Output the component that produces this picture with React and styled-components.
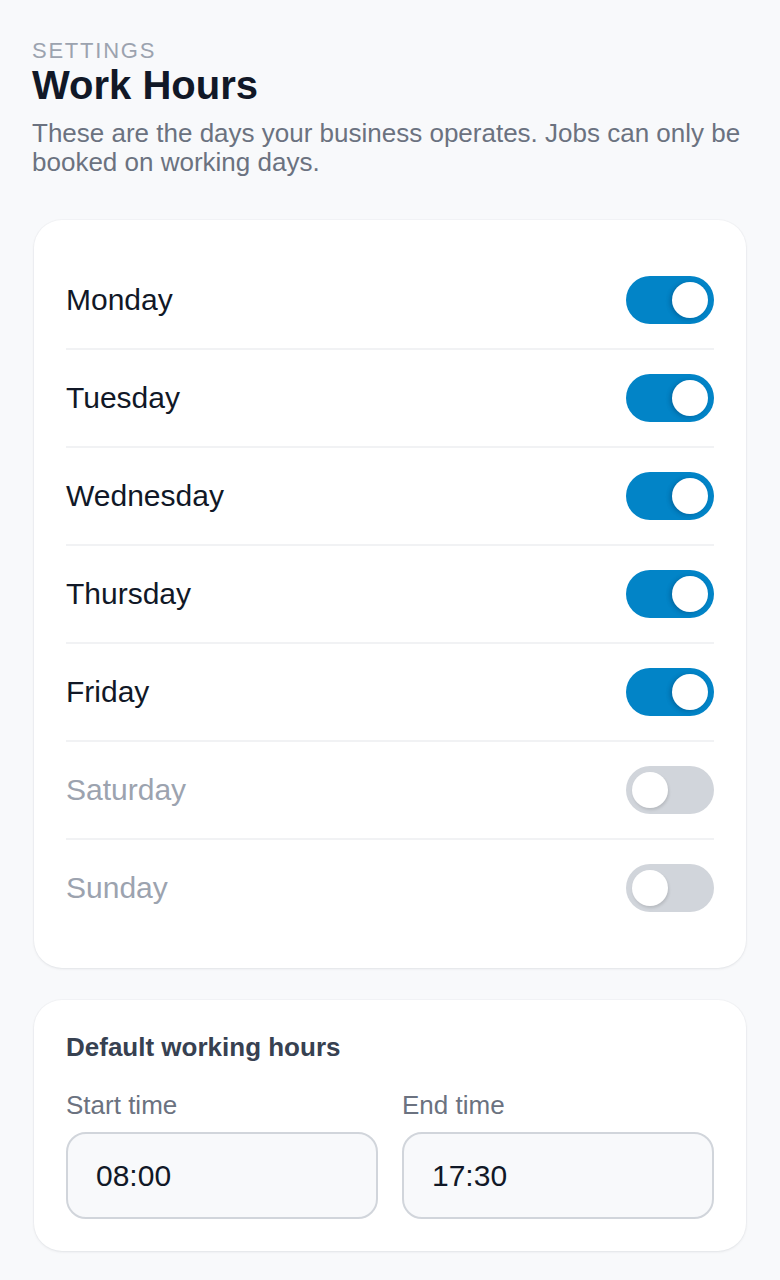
import React, { useState } from 'react';
import styled, { createGlobalStyle } from 'styled-components';

const GlobalStyle = createGlobalStyle`
  * { box-sizing: border-box; }
  body {
    margin: 0;
    background: #f8f9fb;
    font-family: "Liberation Sans", Arial, sans-serif;
    color: #111827;
  }
`;

const Page = styled.div`
  padding: 39px 34px 28px;
`;

const Header = styled.header`
  display: flex;
  flex-direction: column;
  margin-left: -2px;
`;

const Eyebrow = styled.div`
  font-size: 22px;
  line-height: 24px;
  letter-spacing: 0.08em;
  color: #9ca3af;
`;

const Title = styled.h1`
  margin: 0;
  font-size: 40px;
  line-height: 44px;
  font-weight: 700;
  color: #111827;
`;

const Description = styled.p`
  margin: 12px 0 0;
  font-size: 26px;
  line-height: 29px;
  color: #6b7280;
`;

const Card = styled.section`
  background: #ffffff;
  border-radius: 28px;
  box-shadow: 0 1px 3px rgba(17, 24, 39, 0.08), 0 0 0 1px rgba(17, 24, 39, 0.02);
  padding: 32px;
  margin-top: ${(props) => props.top || 32}px;
`;

const DayRow = styled.div`
  display: flex;
  align-items: center;
  justify-content: space-between;
  height: 98px;
  border-bottom: 2px solid #f1f2f4;
  &:last-child {
    border-bottom: none;
    height: 96px;
  }
`;

const DayName = styled.span`
  font-size: 30px;
  color: ${(props) => (props.active ? '#111827' : '#9ca3af')};
`;

const Switch = styled.button`
  position: relative;
  width: 88px;
  height: 48px;
  border: none;
  border-radius: 24px;
  padding: 0;
  cursor: pointer;
  background: ${(props) => (props.on ? '#0284c7' : '#d1d5db')};
`;

const Knob = styled.span`
  position: absolute;
  top: 6px;
  left: ${(props) => (props.on ? '46px' : '6px')};
  width: 36px;
  height: 36px;
  border-radius: 50%;
  background: #ffffff;
  box-shadow: ${(props) => (props.on ? '-2px 1px 4px rgba(0, 40, 80, 0.3)' : '1px 2px 3px rgba(0, 0, 0, 0.12)')};
`;

const SectionTitle = styled.h2`
  margin: 0;
  font-size: 26px;
  line-height: 30px;
  font-weight: 700;
  color: #374151;
`;

const Fields = styled.div`
  display: grid;
  grid-template-columns: 1fr 1fr;
  column-gap: 24px;
  margin-top: 28px;
`;

const Field = styled.label`
  display: flex;
  flex-direction: column;
  gap: 12px;
`;

const FieldLabel = styled.span`
  font-size: 26px;
  line-height: 30px;
  color: #6b7280;
`;

const TimeInput = styled.input`
  height: 87px;
  width: 100%;
  padding: 0 28px;
  border: 2px solid #d1d5db;
  border-radius: 20px;
  background: #f8f9fb;
  font-family: inherit;
  font-size: 30px;
  color: #111827;
  outline: none;
`;

const days = [
  { name: 'Monday', on: true },
  { name: 'Tuesday', on: true },
  { name: 'Wednesday', on: true },
  { name: 'Thursday', on: true },
  { name: 'Friday', on: true },
  { name: 'Saturday', on: false },
  { name: 'Sunday', on: false },
];

const App = () => {
  const [schedule, setSchedule] = useState(days);

  const toggle = (name) =>
    setSchedule((list) => list.map((d) => (d.name === name ? { ...d, on: !d.on } : d)));

  return (
    <Page>
      <GlobalStyle />
      <Header>
        <Eyebrow>SETTINGS</Eyebrow>
        <Title>Work Hours</Title>
        <Description>
          These are the days your business operates. Jobs can only be booked on working days.
        </Description>
      </Header>

      <Card top={43}>
        {schedule.map((day) => (
          <DayRow key={day.name}>
            <DayName active={day.on}>{day.name}</DayName>
            <Switch on={day.on} onClick={() => toggle(day.name)} aria-label={day.name}>
              <Knob on={day.on} />
            </Switch>
          </DayRow>
        ))}
      </Card>

      <Card top={32}>
        <SectionTitle>Default working hours</SectionTitle>
        <Fields>
          <Field>
            <FieldLabel>Start time</FieldLabel>
            <TimeInput defaultValue="08:00" />
          </Field>
          <Field>
            <FieldLabel>End time</FieldLabel>
            <TimeInput defaultValue="17:30" />
          </Field>
        </Fields>
      </Card>
    </Page>
  );
};

export default App;
